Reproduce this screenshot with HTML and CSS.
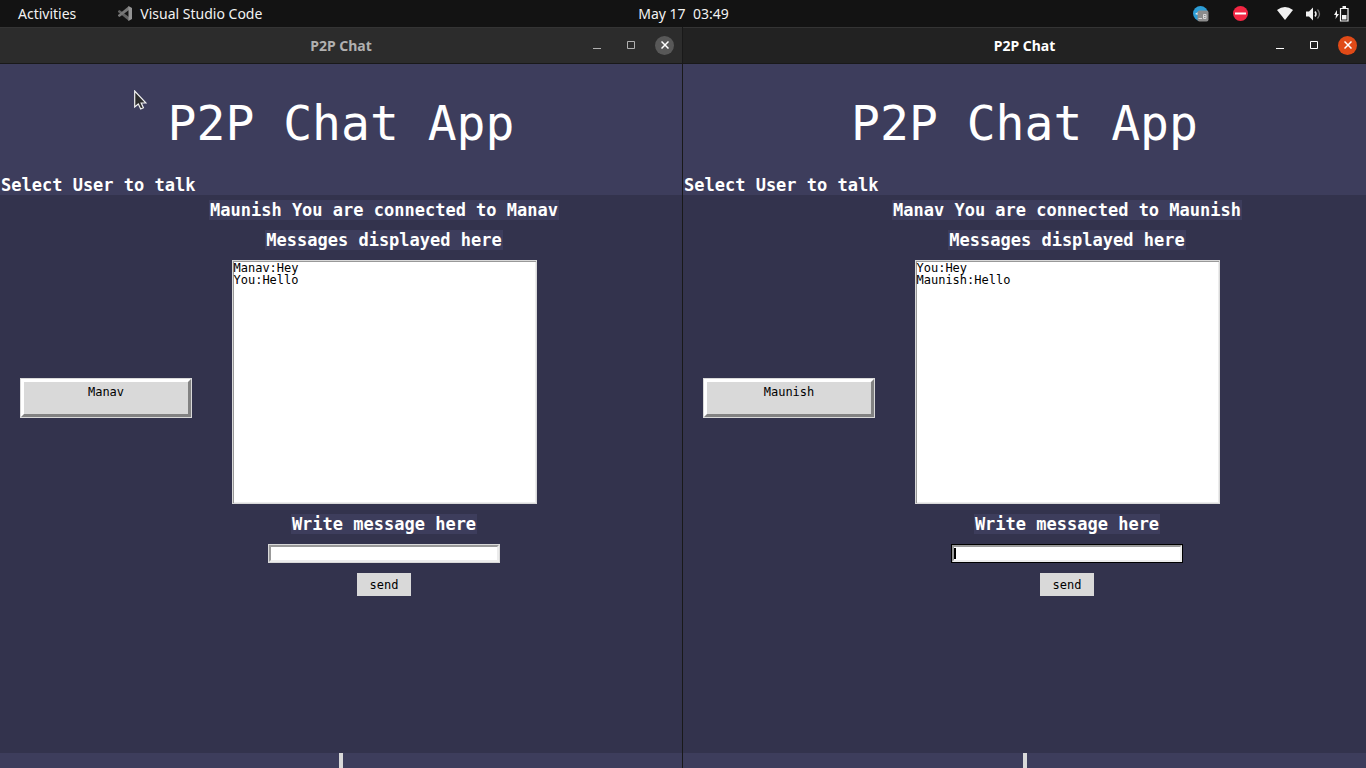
FILE: index.html
```html
<!DOCTYPE html>
<html lang="en">
<head>
<meta charset="utf-8">
<title>P2P Chat</title>
<link rel="stylesheet" href="styles.css">
</head>
<body>
<header class="topbar">
  <div class="topbar-left">
    <button class="top-item" type="button">Activities</button>
    <button class="top-item" type="button">
      <svg width="15" height="15" viewBox="0 0 15 15" aria-hidden="true"><path d="M0 5 1.500 4 11 11v4L0 6z" fill="#626262"/><path d="M0 10 1.500 11 11 4V0L0 9z" fill="#777"/><path d="M10.500 0 14 2v11l-3.500 2z" fill="#939393"/></svg>
      Visual Studio Code
    </button>
  </div>
  <time class="clock">May 17&nbsp; 03:49</time>
  <div class="tray">
    <svg class="tray-chat" width="16" height="16" viewBox="0 0 16 16" aria-hidden="true"><circle cx="7.500" cy="7.500" r="7.500" fill="#2c9dd6"/><path d="M2 8 5 6v3z" fill="#e3eff5"/><rect x="4.500" y="4.500" width="11" height="11" rx="2" fill="#8c8c8c"/><path d="M5.500 12.500H9M10.500 8.500H13v4h-2.500zM10.500 10.500H13" fill="none" stroke="#d6d6d6"/></svg>
    <svg class="tray-busy" width="15" height="15" viewBox="0 0 15 15" aria-hidden="true"><circle cx="7.500" cy="7.500" r="7.500" fill="#f22643"/><path d="M2 6.500h11v2H2z" fill="#fff"/></svg>
    <svg class="tray-wifi" width="16" height="13" viewBox="0 0 16 13" aria-hidden="true"><path d="M0 3Q8-3 16 3L8 13z" fill="#f2f2f2"/></svg>
    <svg class="tray-sound" width="15" height="14" viewBox="0 0 15 14" aria-hidden="true"><path d="M0 4.500h3L7 .5v13l-4-4H0z" fill="#f2f2f2"/><path d="M9 4.500q2 2.500 0 5" fill="none" stroke="#f2f2f2" stroke-width="1.500"/><path d="M11.500 2.500q4 4.500 0 9" fill="none" stroke="#777" stroke-width="1.300"/></svg>
    <svg width="15" height="16" viewBox="0 0 15 16" aria-hidden="true"><path d="M3 4 0 9h2l-.5 4L5 8H3z" fill="#f2f2f2"/><path d="M6.500 2.500h7.500v12.500H6.500z" fill="none" stroke="#f2f2f2" stroke-width="1.200"/><path d="M8.500 0h3.500v2H8.500zM8 9h4.500v4.500H8z" fill="#f2f2f2"/></svg>
  </div>
</header>

<main class="desktop">
  <section class="window window-inactive">
    <div class="titlebar">
      <span class="window-name">P2P Chat</span>
      <div class="controls">
        <button type="button" aria-label="Minimize"><svg width="8" height="10" viewBox="0 0 8 10"><path d="M0 8.500h8" stroke="currentColor"/></svg></button>
        <button type="button" aria-label="Maximize"><svg width="8" height="8" viewBox="0 0 8 8"><path d="M.5.5h7v7h-7z" fill="none" stroke="currentColor"/></svg></button>
        <button type="button" class="close" aria-label="Close"><svg width="8" height="8" viewBox="0 0 8 8"><path d="m.5.5 7 7m0-7-7 7" stroke="#fff" stroke-width="1.500"/></svg></button>
      </div>
    </div>
    <div class="app-head">
      <h1>P2P Chat App</h1>
      <p class="caption">Select User to talk</p>
    </div>
    <div class="app-body">
      <button class="user" type="button">Manav</button>
      <form class="chat">
        <p class="caption">Maunish You are connected to Manav</p>
        <p class="caption">Messages displayed here</p>
        <ul class="messages"><li>Manav:Hey</li><li>You:Hello</li></ul>
        <label class="caption" for="message-a">Write message here</label>
        <div class="field"><input class="message" id="message-a" type="text"></div>
        <button class="send" type="button">send</button>
      </form>
    </div>
    <div class="app-foot"><span class="sash"></span></div>
    <svg class="pointer" width="13" height="21" viewBox="0 0 13 21" aria-hidden="true"><path d="M.7 1v16l3.600-3 2.400 5 2.700-1.200L7.200 13H12z" fill="#2c2c2c" stroke="#f2f2f2" stroke-width="1.200"/></svg>
  </section>

  <section class="window">
    <div class="titlebar">
      <span class="window-name">P2P Chat</span>
      <div class="controls">
        <button type="button" aria-label="Minimize"><svg width="8" height="10" viewBox="0 0 8 10"><path d="M0 8.500h8" stroke="currentColor"/></svg></button>
        <button type="button" aria-label="Maximize"><svg width="8" height="8" viewBox="0 0 8 8"><path d="M.5.5h7v7h-7z" fill="none" stroke="currentColor"/></svg></button>
        <button type="button" class="close" aria-label="Close"><svg width="8" height="8" viewBox="0 0 8 8"><path d="m.5.5 7 7m0-7-7 7" stroke="#fff" stroke-width="1.500"/></svg></button>
      </div>
    </div>
    <div class="app-head">
      <h1>P2P Chat App</h1>
      <p class="caption">Select User to talk</p>
    </div>
    <div class="app-body">
      <button class="user" type="button">Maunish</button>
      <form class="chat">
        <p class="caption">Manav You are connected to Maunish</p>
        <p class="caption">Messages displayed here</p>
        <ul class="messages"><li>You:Hey</li><li>Maunish:Hello</li></ul>
        <label class="caption" for="message-b">Write message here</label>
        <div class="field field-active"><input class="message" id="message-b" type="text"><span class="caret"></span></div>
        <button class="send" type="button">send</button>
      </form>
    </div>
    <div class="app-foot"><span class="sash"></span></div>
  </section>
</main>
</body>
</html>
```
FILE: styles.css
```css
* { box-sizing: border-box; }

body {
  margin: 0;
  min-height: 100vh;
  display: flex;
  flex-direction: column;
  background: #33334d;
  font-family: "DejaVu Sans Mono", monospace;
  font-size: 12px;
}

button { font: inherit; color: inherit; border: 0; padding: 0; background: none; }
svg { display: block; }
h1, p, ul { margin: 0; padding: 0; }

/* Desktop bar */
.topbar {
  display: grid;
  grid-template-columns: 1fr auto 1fr;
  align-items: center;
  height: 27px;
  padding: 0 17px 0 18px;
  background: #131313;
  color: #f2f2f2;
  font-family: "Noto Sans", sans-serif;
  font-size: 14px;
}
.topbar-left { display: flex; gap: 42px; }
.top-item { display: flex; align-items: center; gap: 7px; }
.tray { display: flex; align-items: center; justify-content: flex-end; }
.tray-chat { margin-right: 24px; }
.tray-busy { margin-right: 29px; }
.tray-wifi { margin-right: 13px; }
.tray-sound { margin-right: 13px; }

/* Windows */
.desktop { flex: 1; display: grid; grid-template-columns: 1fr 1fr; }
.window { position: relative; display: flex; flex-direction: column; }
.window-inactive { border-right: 1px solid #191919; }

.titlebar {
  display: grid;
  grid-template-columns: 1fr auto 1fr;
  align-items: center;
  height: 37px;
  padding: 0 9px 1px;
  border-top: 1px solid #343434;
  border-bottom: 1px solid #191919;
  background: #222;
  color: #fff;
  font-family: "Noto Sans", sans-serif;
}
.window-inactive .titlebar { padding: 0 8px 1px; background: #2c2c2c; color: #b0b0b0; }
.window-name { grid-column: 2; font-size: 14px; font-weight: 700; }
.controls { display: flex; justify-content: flex-end; gap: 15px; }
.controls button {
  display: grid;
  place-items: center;
  width: 19px;
  height: 19px;
  border-radius: 50%;
}
.controls .close { background: #e04a17; }
.window-inactive .close { background: #585858; }

/* Chat app */
.app-head { background: #3d3d5c; color: #fff; }
.app-head h1 {
  padding: 31px 0 23px;
  font-size: 48px;
  line-height: 57px;
  font-weight: 400;
  text-align: center;
}
.caption {
  padding: 0 1px;
  background: #3d3d5c;
  color: #fff;
  font-size: 17px;
  line-height: 20px;
  font-weight: 700;
  white-space: nowrap;
}
.app-body {
  flex: 1;
  display: flex;
  align-items: flex-start;
  padding: 5px 20px;
  gap: 20px;
}
.user {
  flex: 0 0 170px;
  height: 38px;
  margin: 179px 1px 0 1px;
  padding-bottom: 12px;
  border: 3px solid;
  border-color: #fff #828282 #828282 #fff;
  box-shadow: 0 0 0 1px #d9d9d9;
  background: #d9d9d9;
  color: #000;
}
.chat {
  flex: 0 0 344px;
  min-width: 0;
  display: flex;
  flex-direction: column;
  align-items: center;
  gap: 10px;
}
.messages {
  width: 305px;
  height: 244px;
  padding: 1px 0;
  border: 1px solid #d9d9d9;
  box-shadow: inset 1px 1px #999, inset -1px -1px #ececec;
  background: #fff;
  color: #000;
  line-height: 12px;
  list-style: none;
}
.messages li { padding: 0 1px; }
.field { position: relative; width: 232px; height: 19px; border: 1px solid #d9d9d9; }
.field-active { border-color: #000; }
.message {
  display: block;
  width: 100%;
  height: 100%;
  padding: 0 1px;
  border: 2px solid;
  border-color: #999 #ececec #ececec #999;
  background: #fff;
  font: inherit;
  outline: 0;
}
.caret { position: absolute; left: 2px; top: 3px; width: 2px; height: 11px; background: #000; }
.send { width: 54px; height: 23px; background: #d9d9d9; color: #000; }

.app-foot { display: flex; justify-content: center; height: 15px; background: #3d3d5c; }
.sash { width: 4px; background: #d9d9d9; }
.pointer { position: absolute; left: 134px; top: 63px; }
```
